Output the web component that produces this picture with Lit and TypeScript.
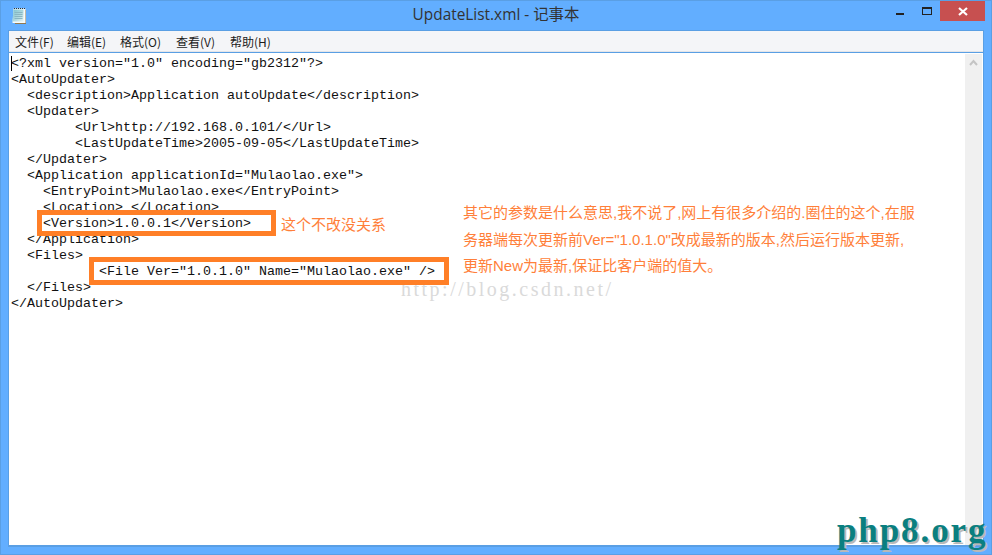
import { LitElement, html, css } from "lit";
import { customElement } from "lit/decorators.js";

const LINES = [
  `<?xml version="1.0" encoding="gb2312"?>`,
  `<AutoUpdater>`,
  `  <description>Application autoUpdate</description>`,
  `  <Updater>`,
  `        <Url>http://192.168.0.101/</Url>`,
  `        <LastUpdateTime>2005-09-05</LastUpdateTime>`,
  `  </Updater>`,
  `  <Application applicationId="Mulaolao.exe">`,
  `    <EntryPoint>Mulaolao.exe</EntryPoint>`,
  `    <Location> </Location>`,
  `    <Version>1.0.0.1</Version>`,
  `  </Application>`,
  `  <Files>`,
  `           <File Ver="1.0.1.0" Name="Mulaolao.exe" />`,
  `  </Files>`,
  `</AutoUpdater>`,
];

@customElement("app-root")
export class AppRoot extends LitElement {
  static styles = css`
    :host { display: block; width: 992px; height: 555px; overflow: hidden; }
    .window {
      position: relative; box-sizing: border-box; width: 992px; height: 555px;
      background: #62aeff; border: 1px solid #5a9fe4;
      display: flex; flex-direction: column;
      font-family: "Noto Sans CJK SC", sans-serif;
    }
    .titlebar { height: 29px; display: grid; grid-template-columns: 1fr auto 1fr; align-items: start; flex: none; }
    .app-icon { margin: 6px 0 0 10px; display: block; }
    .title { font: 15.4px/28px "Open Sans", "Noto Sans CJK SC", sans-serif; color: #333; }
    .controls { justify-self: end; display: flex; align-items: flex-start; margin-right: 6px; }
    .min { width: 8px; height: 2px; background: #222; margin: 12px 18px 0 0; }
    .max { box-sizing: border-box; height: 8px; border: 1px solid #222; border-top-width: 2px; margin: 6px 8px 0 0; width: 10px; }
    .close { width: 45px; height: 20px; background: #c75050; display: flex; align-items: center; justify-content: center; }
    .client { flex: 1; margin: 0 7px 7px 7px; display: flex; flex-direction: column; border: 1px solid #5a9fe4; border-bottom-width: 2px; min-height: 0; }
    .menu {
      height: 20px; flex: none; background: #f4f5f8; border-bottom: 1px solid #e4e5e8;
      display: flex; align-items: center; font-size: 12px; color: #1c1c1c;
    }
    .menu span { white-space: nowrap; }
    .m1 { margin-left: 6px; width: 52px; }
    .m2 { width: 53px; }
    .m3 { width: 56px; }
    .m4 { width: 54px; }
    .editor { flex: 1; display: flex; min-height: 0; border-top: 1px solid #5a9fe4; background: #fff; }
    .text {
      flex: 1; position: relative; padding: 3px 0 0 2px; margin: 0;
      font: 13.333px/16px "Liberation Mono", monospace; color: #111; white-space: pre;
    }
    .line { display: block; height: 16px; }
    .caret { position: absolute; left: 2px; top: 3px; width: 1px; height: 15px; background: #000; }
    .scroll { width: 17px; margin-right: 1px; background: #f0f0f0; flex: none; margin-top: 1px; }
    .arrow { display: block; margin: 5px 0 0 4px; }
    .box { position: absolute; box-sizing: border-box; border: 5px solid #ff7f27; }
    .box1 { left: 36px; top: 209px; width: 239px; height: 26px; }
    .box2 { left: 88px; top: 256px; width: 360px; height: 28px; }
    .note {
      position: absolute; color: #ff7f3a; font-size: 15px; white-space: nowrap;
      font-family: "Liberation Sans", "Noto Sans CJK SC", sans-serif;
    }
    .note1 { left: 280px; top: 213px; line-height: 22px; }
    .note2 { left: 462px; top: 199px; line-height: 26.5px; }
    .watermark {
      position: absolute; left: 400px; top: 276px; color: #dadada;
      font: 20px/24px "Liberation Serif", serif; letter-spacing: 2.5px; white-space: nowrap;
    }
    .logo {
      position: absolute; left: 836px; top: 510px; color: #0a7f80;
      font: bold 35px/40px "Liberation Serif", serif; letter-spacing: 1.9px; white-space: nowrap;
      text-shadow: 2px 2px 0 #b9b9b9;
    }
  `;

  render() {
    return html`
      <div class="window">
        <div class="titlebar">
          <svg class="app-icon" width="17" height="18" viewBox="0 0 17 18">
            <defs>
              <linearGradient id="pg" x1="0" y1="0" x2="1" y2="1">
                <stop offset="0" stop-color="#7fc4cf" />
                <stop offset="0.6" stop-color="#b4dbe2" />
                <stop offset="1" stop-color="#e6f4f5" />
              </linearGradient>
            </defs>
            <path d="M3 3h12v14H4z" fill="#94794f" />
            <path d="M2.5 1.5h12v14.5h-13z" fill="#f6fbfb" />
            <path d="M2.5 2.5h10v12H1.5z" fill="url(#pg)" />
            <path d="M3 1.5h11.5" stroke="#333" stroke-dasharray="1 1" />
            <path d="M3.5 5.5h8M3.5 7.5h8M3.5 9.5h8M3.5 11.5h8" stroke="#8ab7c2" />
          </svg>
          <div class="title">UpdateList.xml - 记事本</div>
          <div class="controls">
            <div class="min"></div>
            <div class="max"></div>
            <div class="close">
              <svg width="10" height="9" viewBox="0 0 10 9">
                <path d="M1 1l8 7M9 1l-8 7" stroke="#fff" stroke-width="2.2" />
              </svg>
            </div>
          </div>
        </div>
        <div class="client">
          <div class="menu">
            <span class="m1">文件(F)</span>
            <span class="m2">编辑(E)</span>
            <span class="m3">格式(O)</span>
            <span class="m4">查看(V)</span>
            <span>帮助(H)</span>
          </div>
          <div class="editor">
            <div class="text">${LINES.map((l) => html`<span class="line">${l}</span>`)}<i class="caret"></i></div>
            <div class="scroll">
              <svg class="arrow" width="9" height="7" viewBox="0 0 9 7">
                <path d="M1 6l3.5-4L8 6" fill="none" stroke="#c4c4c4" stroke-width="2" />
              </svg>
            </div>
          </div>
        </div>
        <div class="watermark">http://blog.csdn.net/</div>
        <div class="box box1"></div>
        <div class="box box2"></div>
        <div class="note note1">这个不改没关系</div>
        <div class="note note2">其它的参数是什么意思,我不说了,网上有很多介绍的.圈住的这个,在服<br />务器端每次更新前Ver="1.0.1.0"改成最新的版本,然后运行版本更新,<br />更新New为最新,保证比客户端的值大。</div>
        <div class="logo">php8.org</div>
      </div>
    `;
  }
}
